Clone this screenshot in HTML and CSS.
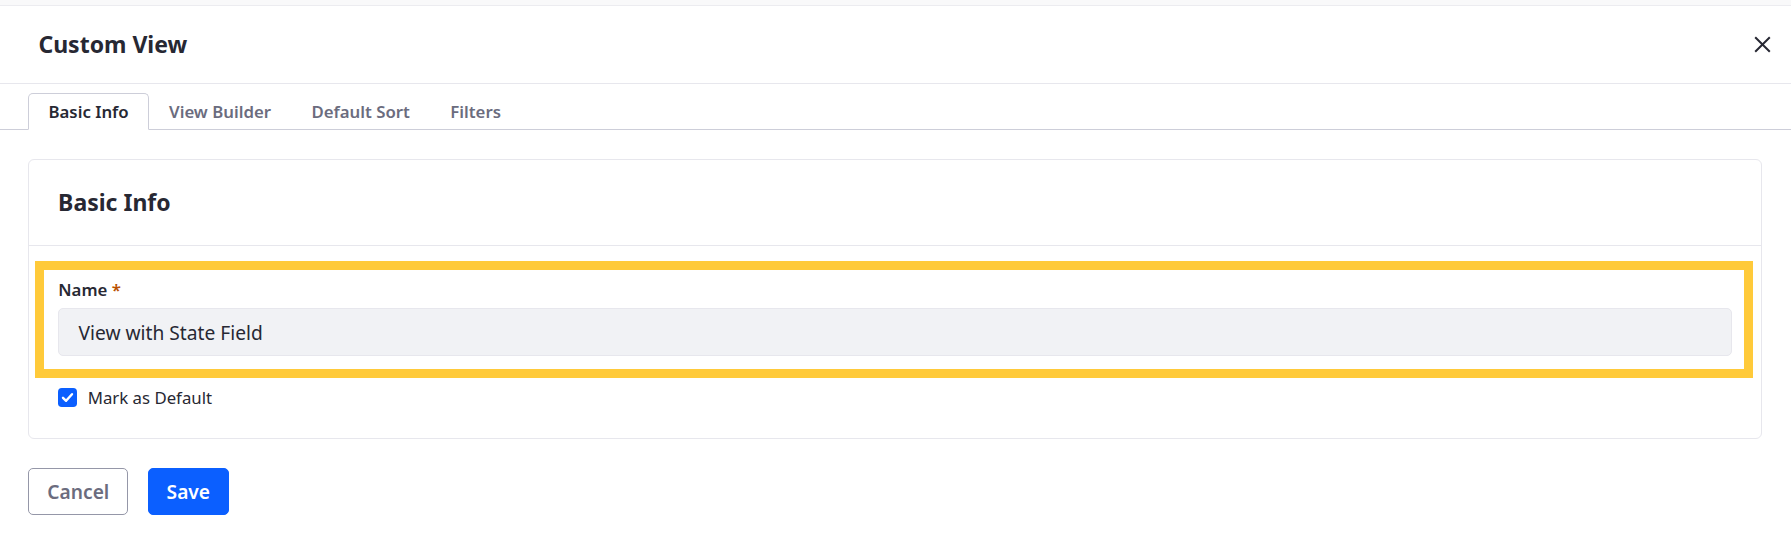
FILE: index.html
```html
<!DOCTYPE html>
<html lang="en">
<head>
<meta charset="utf-8">
<title>Custom View</title>
<link rel="stylesheet" href="styles.css">
</head>
<body>
<div class="top-strip"></div>
<div class="modal">
  <header class="modal-header">
    <h1 class="modal-title">Custom View</h1>
    <button class="close" type="button" aria-label="Close">
      <svg width="17" height="17" viewBox="0 0 17 17" aria-hidden="true">
        <path d="M1.2 1.2 L15.8 15.8 M15.8 1.2 L1.2 15.8" stroke="#272833" stroke-width="2" fill="none"/>
      </svg>
    </button>
  </header>
  <nav class="tabs">
    <a class="tab active">Basic Info</a>
    <a class="tab">View Builder</a>
    <a class="tab">Default Sort</a>
    <a class="tab">Filters</a>
  </nav>
  <main class="content">
    <section class="card">
      <div class="card-header">
        <h2 class="card-title">Basic Info</h2>
      </div>
      <div class="card-body">
        <div class="form-group">
          <label class="field-label">Name <span class="req">*</span></label>
          <div class="input">View with State Field</div>
          <span class="highlight"></span>
        </div>
        <label class="check">
          <span class="box">
            <svg width="13" height="13" viewBox="0 0 13 13" aria-hidden="true">
              <path d="M2 6.8 L5.1 9.8 L11 3.2" stroke="#fff" stroke-width="2.4" fill="none" stroke-linecap="round" stroke-linejoin="round"/>
            </svg>
          </span>
          Mark as Default
        </label>
      </div>
    </section>
    <div class="actions">
      <button class="btn btn-secondary" type="button">Cancel</button>
      <button class="btn btn-primary" type="button">Save</button>
    </div>
  </main>
</div>
</body>
</html>
```
FILE: styles.css
```css
* { box-sizing: border-box; }
html, body { margin: 0; padding: 0; }
body {
  background: #fff;
  font-family: "Noto Sans", "Open Sans", sans-serif;
  color: #272833;
  overflow: hidden;
  height: 540px;
}
.top-strip {
  height: 6px;
  background: #f9f9fa;
  border-bottom: 1px solid #ececf0;
}
.modal-header {
  height: 78px;
  display: flex;
  align-items: center;
  justify-content: space-between;
  padding: 0 20px 0 38.4px;
  border-bottom: 1px solid #e7e7ed;
}
.modal-title {
  margin: 0;
  font-size: 23px;
  font-weight: 700;
  line-height: 28.8px;
  color: #272833;
}
.close {
  border: 0;
  background: none;
  padding: 0;
  margin: 0;
  width: 17px;
  height: 17px;
  display: flex;
}
.tabs {
  display: flex;
  padding: 9px 0 0 28.3px;
  border-bottom: 1px solid #cdced9;
}
.tab {
  display: block;
  font-size: 16.8px;
  font-weight: 600;
  line-height: 25px;
  padding: 5px 19.2px;
  color: #6b6c7e;
  border: 1px solid transparent;
  border-radius: 5px 5px 0 0;
  margin-bottom: -1px;
}
.tab.active {
  color: #272833;
  border-color: #cdced9 #cdced9 #fff;
  background: #fff;
}
.content {
  padding: 28.8px 29.3px 0 28.3px;
}
.card {
  border: 1px solid #e7e7ed;
  border-radius: 6px;
  background: #fff;
}
.card-header {
  padding: 28.4px 28.8px 27.6px;
  border-bottom: 1px solid #e7e7ed;
}
.card-title {
  margin: 0;
  font-size: 23px;
  font-weight: 700;
  line-height: 28.8px;
}
.card-body {
  padding: 31.5px 29px 27.5px;
}
.form-group {
  position: relative;
}
.field-label {
  display: block;
  font-size: 16.8px;
  font-weight: 600;
  line-height: 25.2px;
  margin-bottom: 6.2px;
}
.req {
  color: #b95000;
}
.input {
  height: 47.6px;
  display: flex;
  align-items: center;
  padding: 0 19.2px;
  background: #f1f2f5;
  border: 1px solid #e7e7ed;
  border-radius: 5px;
  font-size: 19.2px;
  color: #272833;
}
.highlight {
  position: absolute;
  left: -23px;
  right: -21px;
  top: -16.5px;
  bottom: -21.6px;
  border: 9px solid #ffca3a;
  pointer-events: none;
}
.check {
  display: flex;
  align-items: center;
  height: 25.2px;
  margin-top: 28.8px;
  font-size: 16.8px;
  line-height: 25.2px;
}
.box {
  width: 18.5px;
  height: 18.5px;
  border-radius: 3.8px;
  background: #0b5fff;
  display: flex;
  align-items: center;
  justify-content: center;
  margin-right: 10.9px;
  flex: none;
}
.actions {
  display: flex;
  gap: 19.3px;
  margin-top: 29.5px;
}
.btn {
  height: 47.4px;
  padding: 0 18px;
  border-radius: 5px;
  font-family: "Noto Sans", "Open Sans", sans-serif;
  font-size: 19.2px;
  font-weight: 600;
  line-height: 1;
  border: 1px solid transparent;
}
.btn-secondary {
  background: #fff;
  border-color: #9597a8;
  color: #6b6c7e;
}
.btn-primary {
  background: #0b5fff;
  border-color: #0b5fff;
  color: #fff;
}
```
